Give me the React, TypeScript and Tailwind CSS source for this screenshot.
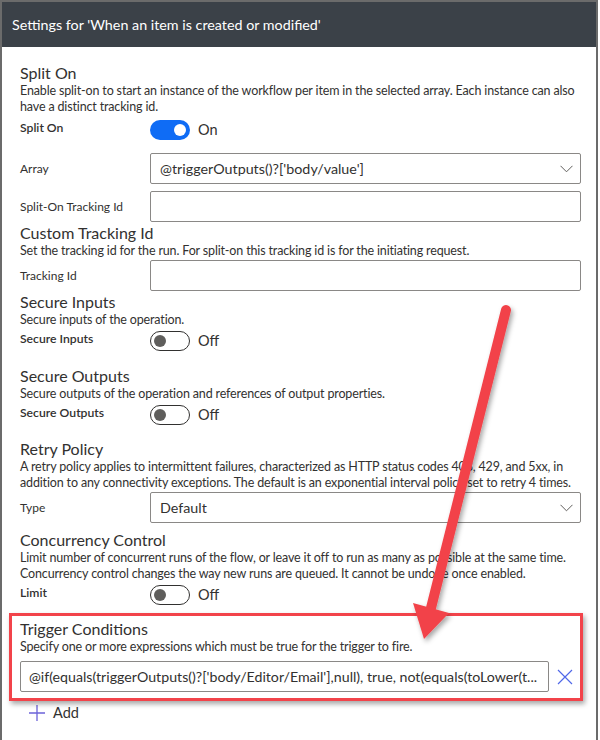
import React from "react";

const font = { fontFamily: 'Lato, "Noto Sans", Arial, sans-serif' };

function Title({ children, className = "" }: { children: React.ReactNode; className?: string }) {
  return <div className={`text-[16px] leading-[20px] text-[#323130] whitespace-nowrap ${className}`}>{children}</div>;
}

function Desc({ children }: { children: React.ReactNode }) {
  return (
    <div className="text-[12.5px] tracking-[-0.15px] leading-[16px] text-[#323130] whitespace-nowrap">{children}</div>
  );
}

function Toggle({ on }: { on: boolean }) {
  return on ? (
    <div className="w-[40px] h-[20px] rounded-full bg-[#0f6cf5] flex items-center justify-end pr-[4px]">
      <div className="w-[12px] h-[12px] rounded-full bg-white" />
    </div>
  ) : (
    <div className="w-[40px] h-[20px] rounded-full border border-[#323130] bg-white flex items-center pl-[3px]">
      <div className="w-[12px] h-[12px] rounded-full bg-[#5f5e5c]" />
    </div>
  );
}

function ToggleRow({ label, on, className = "" }: { label: string; on: boolean; className?: string }) {
  return (
    <div className={`flex h-[24px] ${className}`}>
      <div className="w-[130px] text-[12.2px] leading-[17px] font-semibold text-[#323130] pt-[1px]">{label}</div>
      <div className="flex items-center h-[24px]">
        <Toggle on={on} />
        <span className="ml-[8px] text-[14.5px] text-[#323130]">{on ? "On" : "Off"}</span>
      </div>
    </div>
  );
}

function Chevron() {
  return (
    <svg width="13" height="8" viewBox="0 0 13 8" className="shrink-0">
      <path d="M0.5 0.8 L6.5 6.8 L12.5 0.8" fill="none" stroke="#605e5c" strokeWidth="1" />
    </svg>
  );
}

function InputRow({
  label,
  value,
  select,
  className = "",
}: {
  label: string;
  value?: string;
  select?: boolean;
  className?: string;
}) {
  return (
    <div className={`flex items-center h-[31px] ${className}`}>
      <div className="w-[130px] text-[12px] leading-[17px] text-[#323130] whitespace-nowrap">{label}</div>
      <div className="flex-1 h-[31px] border border-[#8a8886] rounded-[2px] flex items-center pl-[9px] pr-[7px]">
        <span className="flex-1 text-[14.3px] text-[#323130] whitespace-nowrap overflow-hidden">{value}</span>
        {select && <Chevron />}
      </div>
    </div>
  );
}

export default function App() {
  return (
    <div className="w-[600px] h-[740px] bg-white relative overflow-hidden" style={font}>
      <div className="w-[598px] h-[740px] border-x-2 border-t-2 border-[#6b6b6b] flex flex-col">
        <div className="h-[45px] bg-[#3b4148] flex items-center pl-[10px] text-white text-[14.3px] whitespace-nowrap">
          Settings for 'When an item is created or modified'
        </div>
        <div className="pl-[18px] pr-[15px] pt-[16px] flex flex-col">
          <Title>Split On</Title>
          <Desc>
            Enable split-on to start an instance of the workflow per item in the selected array. Each instance can also
            <br />
            have a distinct tracking id.
          </Desc>
          <ToggleRow label="Split On" on className="mt-[3px]" />
          <InputRow label="Array" value="@triggerOutputs()?['body/value']" select className="mt-[11px]" />
          <InputRow label="Split-On Tracking Id" className="mt-[7px]" />

          <Title className="mt-[1px]">Custom Tracking Id</Title>
          <Desc>Set the tracking id for the run. For split-on this tracking id is for the initiating request.</Desc>
          <InputRow label="Tracking Id" className="mt-[1px]" />

          <Title className="mt-[1px]">Secure Inputs</Title>
          <Desc>Secure inputs of the operation.</Desc>
          <ToggleRow label="Secure Inputs" on={false} className="mt-[1px]" />

          <Title className="mt-[13px]">Secure Outputs</Title>
          <Desc>Secure outputs of the operation and references of output properties.</Desc>
          <ToggleRow label="Secure Outputs" on={false} className="mt-[1px]" />

          <Title className="mt-[12px]">Retry Policy</Title>
          <Desc>
            A retry policy applies to intermittent failures, characterized as HTTP status codes 408, 429, and 5xx, in
            <br />
            addition to any connectivity exceptions. The default is an exponential interval policy set to retry 4 times.
          </Desc>
          <InputRow label="Type" value="Default" select className="mt-[1px]" />

          <Title className="mt-[7px]">Concurrency Control</Title>
          <Desc>
            Limit number of concurrent runs of the flow, or leave it off to run as many as possible at the same time.
            <br />
            Concurrency control changes the way new runs are queued. It cannot be undone once enabled.
          </Desc>
          <ToggleRow label="Limit" on={false} className="mt-[1px]" />

          <div className="relative mt-[12px]">
            <div className="absolute -left-[11px] -top-[6px] -right-[2px] -bottom-[9px] border-[3px] border-[#f2434a] shadow-[2px_3px_5px_rgba(0,0,0,0.35)]" />
            <Title>Trigger Conditions</Title>
            <Desc>Specify one or more expressions which must be true for the trigger to fire.</Desc>
            <div className="flex items-center mt-[6px] h-[31px]">
              <div className="flex-1 h-[31px] border border-[#8a8886] rounded-[2px] flex items-center pl-[8px] pr-[6px] overflow-hidden">
                <span className="text-[14.2px] text-[#323130] whitespace-nowrap">
                  @if(equals(triggerOutputs()?['body/Editor/Email'],null), true, not(equals(toLower(t...
                </span>
              </div>
              <div className="w-[32px] flex items-center justify-center">
                <svg width="16" height="16" viewBox="0 0 16 16">
                  <path d="M1 1 L15 15 M15 1 L1 15" stroke="#5068e8" strokeWidth="1.2" fill="none" />
                </svg>
              </div>
            </div>
          </div>

          <div className="flex items-center mt-[12px] h-[18px] pl-[8px]">
            <svg width="18" height="18" viewBox="0 0 18 18">
              <path d="M9 1 V17 M1 9 H17" stroke="#6c63d9" strokeWidth="1.3" fill="none" />
            </svg>
            <span className="ml-[7px] text-[14.5px] text-[#323130]">Add</span>
          </div>
        </div>
      </div>

      <svg className="absolute left-0 top-0 pointer-events-none" width="600" height="740" viewBox="0 0 600 740">
        <defs>
          <filter id="sh" x="-20%" y="-20%" width="140%" height="140%">
            <feDropShadow dx="2" dy="3" stdDeviation="2.5" floodColor="#000" floodOpacity="0.35" />
          </filter>
        </defs>
        <g filter="url(#sh)" fill="#f2434a" stroke="#f2434a">
          <line x1="506" y1="310" x2="431" y2="608" strokeWidth="10" strokeLinecap="round" />
          <polygon points="413,603 449,613 424,639" stroke="none" />
        </g>
      </svg>
    </div>
  );
}
